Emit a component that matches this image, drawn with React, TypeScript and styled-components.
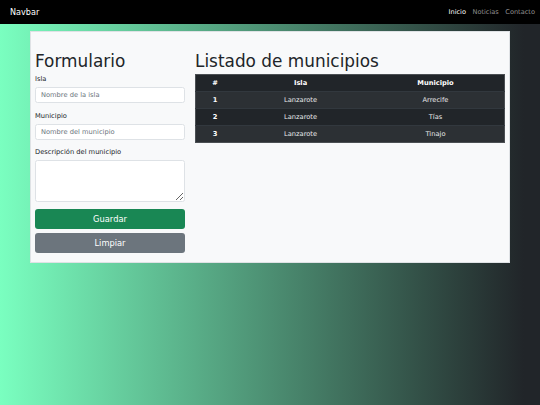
import React from "react";
import styled, { createGlobalStyle } from "styled-components";

const Global = createGlobalStyle`
  html, body { margin: 0; padding: 0; }
  body {
    min-height: 405px;
    font-family: "DejaVu Sans", sans-serif;
    background: linear-gradient(to right, #7affc0 0%, #212529 97%);
    color: #212529;
  }
  * { box-sizing: border-box; }
`;

const Page = styled.div`
  min-height: 405px;
  display: flex;
  flex-direction: column;
`;

const Nav = styled.nav`
  height: 24px;
  background: #000;
  display: flex;
  align-items: center;
  justify-content: space-between;
  padding: 0 5px 0 10px;
`;

const Brand = styled.span`
  color: #fff;
  font-size: 8.1px;
  line-height: 1;
`;

const Links = styled.div`
  display: flex;
  gap: 6.5px;
`;

const NavLink = styled.a<{ $active?: boolean }>`
  font-size: 6.6px;
  line-height: 1;
  text-decoration: none;
  color: ${(p) => (p.$active ? "#fff" : "rgba(255,255,255,0.55)")};
`;

const Card = styled.main`
  margin: 7px 30px 0 30px;
  background: #f8f9fa;
  border: 1px solid #dfe2e5;
  padding: 19px 4px 9px 4px;
  display: grid;
  grid-template-columns: 150px 1fr;
  column-gap: 10px;
  align-items: start;
`;

const Column = styled.section`
  display: flex;
  flex-direction: column;
`;

const Title = styled.h2`
  margin: 0 0 3px 0;
  font-size: 16.9px;
  font-weight: 400;
  line-height: 20.4px;
  color: #212529;
`;

const Field = styled.div`
  display: flex;
  flex-direction: column;
  margin-bottom: 7.5px;
`;

const Label = styled.label`
  font-size: 6.7px;
  line-height: 10px;
  margin-bottom: 3px;
  color: #212529;
`;

const Input = styled.input`
  height: 16px;
  width: 100%;
  border: 1px solid #dee2e6;
  border-radius: 2.5px;
  background: #fff;
  padding: 0 5px;
  font-family: "DejaVu Sans", sans-serif;
  font-size: 6.7px;
  &::placeholder { color: #6c757d; }
`;

const TextArea = styled.textarea`
  height: 42px;
  width: 100%;
  border: 1px solid #dee2e6;
  border-radius: 2.5px;
  background: #fff;
  padding: 3px 5px;
  font-family: "DejaVu Sans", sans-serif;
  font-size: 6.7px;
  resize: vertical;
  display: block;
`;

const Button = styled.button<{ $variant: "success" | "secondary" }>`
  height: 20px;
  width: 100%;
  border: none;
  border-radius: 3px;
  color: #fff;
  font-family: "DejaVu Sans", sans-serif;
  font-size: 8.3px;
  background: ${(p) => (p.$variant === "success" ? "#198754" : "#6c757d")};
  & + & { margin-top: 4px; }
`;

const Actions = styled.div`
  display: flex;
  flex-direction: column;
  margin-top: -1px;
`;

const Table = styled.table`
  width: 100%;
  border-collapse: collapse;
  border: 1px solid #4b4f53;
  font-size: 6.7px;
  color: #fff;
  table-layout: fixed;
`;

const Th = styled.th<{ $w?: string }>`
  height: 16.5px;
  padding: 0;
  font-weight: 700;
  text-align: center;
  background: #212529;
  width: ${(p) => p.$w || "auto"};
`;

const Row = styled.tr<{ $striped: boolean }>`
  background: ${(p) => (p.$striped ? "#2c3034" : "#212529")};
  border-top: 1px solid #32383e;
`;

const Td = styled.td<{ $bold?: boolean }>`
  height: 17px;
  padding: 0;
  text-align: center;
  font-weight: ${(p) => (p.$bold ? 700 : 400)};
  color: ${(p) => (p.$bold ? "#fff" : "#e6e7e8")};
`;

const rows = [
  { id: 1, isla: "Lanzarote", municipio: "Arrecife" },
  { id: 2, isla: "Lanzarote", municipio: "Tías" },
  { id: 3, isla: "Lanzarote", municipio: "Tinajo" },
];

export default function App() {
  return (
    <Page>
      <Global />
      <Nav>
        <Brand>Navbar</Brand>
        <Links>
          <NavLink $active href="#">Inicio</NavLink>
          <NavLink href="#">Noticias</NavLink>
          <NavLink href="#">Contacto</NavLink>
        </Links>
      </Nav>
      <Card>
        <Column>
          <Title>Formulario</Title>
          <Field>
            <Label>Isla</Label>
            <Input placeholder="Nombre de la isla" />
          </Field>
          <Field>
            <Label>Municipio</Label>
            <Input placeholder="Nombre del municipio" />
          </Field>
          <Field>
            <Label>Descripción del municipio</Label>
            <TextArea />
          </Field>
          <Actions>
            <Button $variant="success">Guardar</Button>
            <Button $variant="secondary">Limpiar</Button>
          </Actions>
        </Column>
        <Column>
          <Title>Listado de municipios</Title>
          <Table>
            <thead>
              <tr>
                <Th $w="12.5%">#</Th>
                <Th $w="43%">Isla</Th>
                <Th>Municipio</Th>
              </tr>
            </thead>
            <tbody>
              {rows.map((r, i) => (
                <Row key={r.id} $striped={i % 2 === 0}>
                  <Td $bold>{r.id}</Td>
                  <Td>{r.isla}</Td>
                  <Td>{r.municipio}</Td>
                </Row>
              ))}
            </tbody>
          </Table>
        </Column>
      </Card>
    </Page>
  );
}
